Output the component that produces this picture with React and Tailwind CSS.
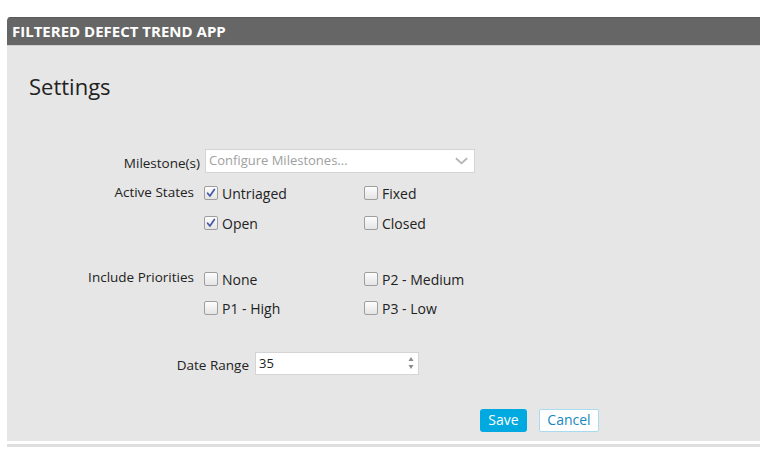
import React from 'react';

const font = { fontFamily: '"Open Sans", "Noto Sans", sans-serif' };

function Box({ checked }) {
  return (
    <span className="relative inline-block w-[14px] h-[14px] shrink-0 rounded-[2px] border border-[#9e9e9e] bg-gradient-to-b from-[#fdfdfd] to-[#e4e4e4]">
      {checked && (
        <svg viewBox="0 0 14 14" className="absolute -left-px -top-px w-[14px] h-[14px]">
          <path d="M3.6 7.2 L5.9 10 L10.4 3.4" fill="none" stroke="#4654a6" strokeWidth="1.7" strokeLinecap="round" strokeLinejoin="round" />
        </svg>
      )}
    </span>
  );
}

function Check({ label, checked }) {
  return (
    <label className="flex items-center gap-[4px] h-[14px] text-[14px] text-[#222]">
      <Box checked={checked} />
      <span>{label}</span>
    </label>
  );
}

export default function App() {
  return (
    <div className="w-[760px] h-[452px] bg-white pt-[17px] pl-[7px] overflow-hidden" style={font}>
      <div className="rounded-tl-[4px] overflow-hidden">
        {/* Header */}
        <div className="h-[28px] bg-[#666666] border-t border-[#5a5a5a] flex items-center px-[5px] text-white text-[15px] font-bold uppercase">
          Filtered Defect Trend App
        </div>

        {/* Body */}
        <div className="h-[396px] bg-[#e6e6e6] border-t border-[#d0d0d0] pt-[25px]">
          <h1 className="pl-[22px] text-[22px] leading-[30px] text-[#222]">Settings</h1>

          {/* Milestones */}
          <div className="mt-[48px] flex items-center">
            <div className="w-[193px] text-right text-[13.5px] text-[#222] pt-[4px]">Milestone(s)</div>
            <div className="ml-[5px] w-[270px] h-[24px] bg-white border border-[#d4d4d4] flex items-center justify-between pl-[3px] pr-[6px]">
              <span className="text-[13px] text-[#a0a0a0]">Configure Milestones...</span>
              <svg viewBox="0 0 14 8" className="w-[13px] h-[8px]">
                <path d="M1 1 L7 6.5 L13 1" fill="none" stroke="#b5b5b5" strokeWidth="2" />
              </svg>
            </div>
          </div>

          {/* Active states */}
          <div className="mt-[13px] flex">
            <div className="w-[193px] pr-[6px] text-right text-[13.5px] leading-[14px] text-[#222] -mt-[1px]">Active States</div>
            <div className="ml-[4px] grid grid-cols-[160px_160px] gap-y-[16px]">
              <Check label="Untriaged" checked />
              <Check label="Fixed" />
              <Check label="Open" checked />
              <Check label="Closed" />
            </div>
          </div>

          {/* Priorities */}
          <div className="mt-[42px] flex">
            <div className="w-[193px] pr-[6px] text-right text-[13.5px] leading-[14px] text-[#222] -mt-[2px]">Include Priorities</div>
            <div className="ml-[4px] grid grid-cols-[160px_160px] gap-y-[15px]">
              <Check label="None" />
              <Check label="P2 - Medium" />
              <Check label="P1 - High" />
              <Check label="P3 - Low" />
            </div>
          </div>

          {/* Date range */}
          <div className="mt-[36px] flex items-center">
            <div className="w-[242px] text-right text-[13.5px] text-[#222] pt-[4px]">Date Range</div>
            <div className="ml-[6px] w-[164px] h-[23px] bg-white border border-[#d4d4d4] flex items-center justify-between pl-[3px] pr-[4px]">
              <span className="text-[13px] text-[#222]">35</span>
              <svg viewBox="0 0 6 14" className="w-[6px] h-[14px]">
                <path d="M0.5 5 L3 1 L5.5 5 Z" fill="#8a8a8a" />
                <path d="M0.5 9 L3 13 L5.5 9 Z" fill="#8a8a8a" />
              </svg>
            </div>
          </div>

          {/* Buttons */}
          <div className="mt-[33px] flex justify-end gap-[12px] pr-[161px]">
            <button className="w-[47px] h-[23px] rounded-[3px] bg-[#00a9e0] text-white text-[14px] leading-none">Save</button>
            <button className="w-[60px] h-[23px] rounded-[2px] bg-white border border-[#a9dbef] text-[#1787c0] text-[14px] leading-none">Cancel</button>
          </div>
        </div>
      </div>
      <div className="mt-[3px] h-[3px] bg-[#dedede]" />
    </div>
  );
}
